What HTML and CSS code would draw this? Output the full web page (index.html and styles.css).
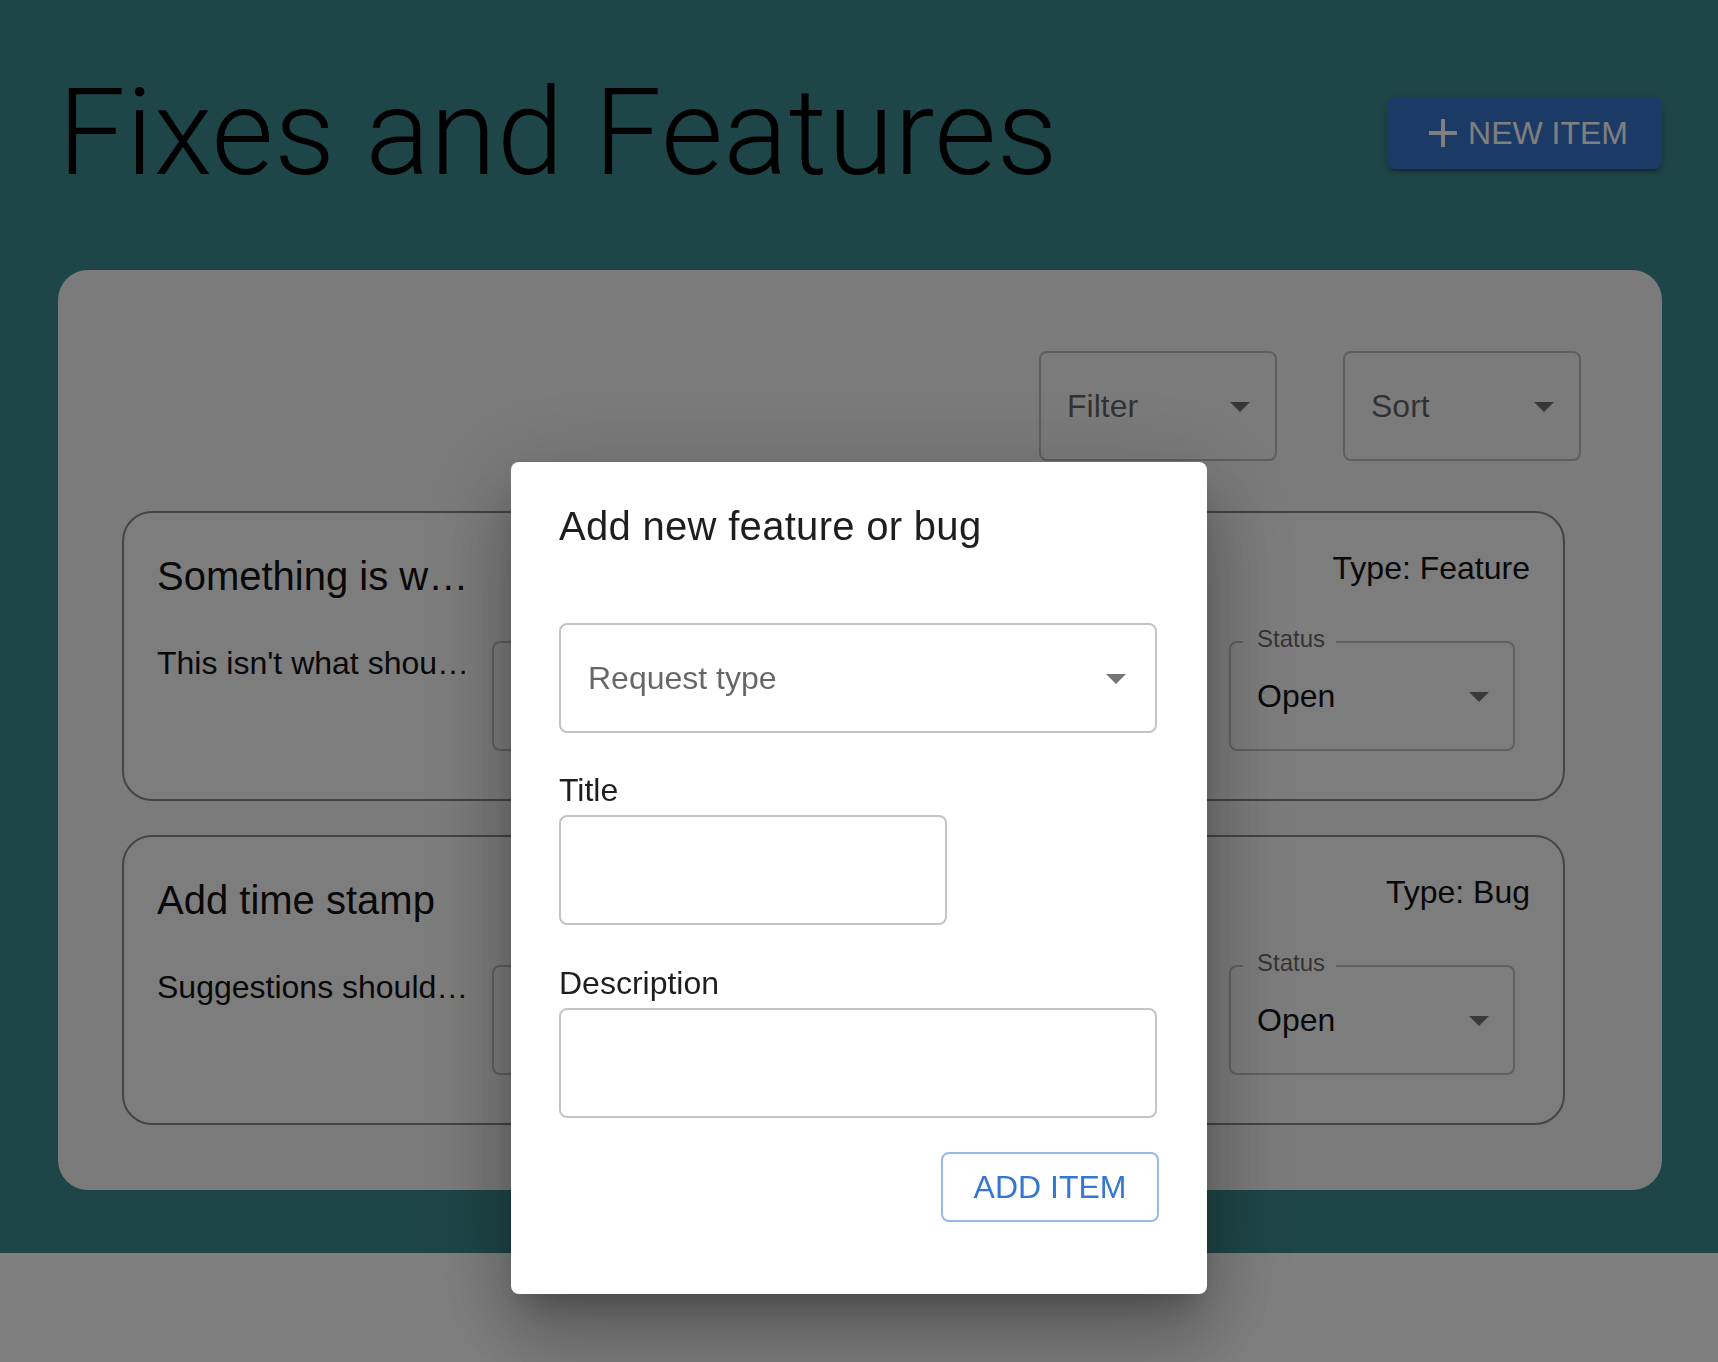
FILE: index.html
```html
<!DOCTYPE html>
<html lang="en">
<head>
<meta charset="utf-8">
<title>Fixes and Features</title>
<link rel="stylesheet" href="styles.css">
</head>
<body>
<div class="page">
  <header class="header">
    <h1 class="title">Fixes and Features</h1>
    <button class="btn-new" type="button">
      <svg class="btn-icon" viewBox="5 5 14 14" aria-hidden="true"><path d="M19 13h-6v6h-2v-6H5v-2h6V5h2v6h6v2z"/></svg>
      <span>New item</span>
    </button>
  </header>

  <main class="panel">
    <div class="toolbar">
      <div class="select select--toolbar">
        <span class="select-placeholder">Filter</span>
        <svg class="arrow" viewBox="0 0 24 24" aria-hidden="true"><path d="M7 10l5 5 5-5z"/></svg>
      </div>
      <div class="select select--toolbar">
        <span class="select-placeholder">Sort</span>
        <svg class="arrow" viewBox="0 0 24 24" aria-hidden="true"><path d="M7 10l5 5 5-5z"/></svg>
      </div>
    </div>

    <div class="cards">
      <article class="card">
        <div class="card-main">
          <h2 class="card-title">Something is wrong</h2>
          <p class="card-desc">This isn't what should happen</p>
        </div>
        <div class="card-middle"><div class="field-box"></div></div>
        <div class="card-side">
          <div class="card-type">Type: Feature</div>
          <div class="status">
            <span class="status-label">Status</span>
            <span class="status-value">Open</span>
            <svg class="arrow" viewBox="0 0 24 24" aria-hidden="true"><path d="M7 10l5 5 5-5z"/></svg>
          </div>
        </div>
      </article>

      <article class="card">
        <div class="card-main">
          <h2 class="card-title">Add time stamp</h2>
          <p class="card-desc">Suggestions should have a time stamp</p>
        </div>
        <div class="card-middle"><div class="field-box"></div></div>
        <div class="card-side">
          <div class="card-type">Type: Bug</div>
          <div class="status">
            <span class="status-label">Status</span>
            <span class="status-value">Open</span>
            <svg class="arrow" viewBox="0 0 24 24" aria-hidden="true"><path d="M7 10l5 5 5-5z"/></svg>
          </div>
        </div>
      </article>
    </div>
  </main>
</div>

<div class="backdrop">
  <div class="dialog" role="dialog" aria-labelledby="dlg-title">
    <h2 class="dialog-title" id="dlg-title">Add new feature or bug</h2>
    <div class="dialog-content">
      <div class="select select--dialog">
        <span class="select-placeholder">Request type</span>
        <svg class="arrow" viewBox="0 0 24 24" aria-hidden="true"><path d="M7 10l5 5 5-5z"/></svg>
      </div>
      <label class="field-label" for="f-title">Title</label>
      <input class="input input--short" id="f-title" type="text">
      <label class="field-label" for="f-desc">Description</label>
      <input class="input" id="f-desc" type="text">
      <div class="actions">
        <button class="btn-add" type="button">Add item</button>
      </div>
    </div>
  </div>
</div>
</body>
</html>
```

FILE: styles.css
```css
* { box-sizing: border-box; }

html, body {
  margin: 0;
  padding: 0;
  background: #ffffff;
  font-family: "Liberation Sans", Arial, Helvetica, sans-serif;
  color: #111;
}

.page {
  background: #3d8b91;
  padding: 0 56px 63px 58px;
}

.header {
  height: 266px;
  display: flex;
  align-items: center;
  justify-content: space-between;
}

.title {
  margin: 0;
  font-family: Roboto, "Liberation Sans", sans-serif;
  font-weight: 300;
  font-size: 120px;
  line-height: 1;
  letter-spacing: 0.6px;
  color: #000;
}

.btn-new {
  display: flex;
  align-items: center;
  height: 72px;
  padding: 0 34px 0 42px;
  border: 0;
  border-radius: 8px;
  background: #3874cc;
  color: #fff;
  font-family: "Liberation Sans", Arial, sans-serif;
  font-size: 32px;
  text-transform: uppercase;
  box-shadow: 0 6px 2px -4px rgba(0,0,0,.2), 0 4px 4px 0 rgba(0,0,0,.14), 0 2px 10px 0 rgba(0,0,0,.12);
}

.btn-icon {
  width: 28px;
  height: 28px;
  margin-right: 11px;
  fill: #fff;
}

.panel {
  margin-top: 4px;
  background: #f6f6f6;
  border-radius: 30px;
  padding: 81px 81px 65px 64px;
}

.toolbar {
  display: flex;
  justify-content: flex-end;
  gap: 66px;
}

.select {
  display: flex;
  align-items: center;
  justify-content: space-between;
  height: 110px;
  border: 2px solid rgba(0,0,0,0.23);
  border-radius: 8px;
  font-size: 32px;
}

.select--toolbar {
  width: 238px;
  padding: 0 11px 0 26px;
}

.select--dialog {
  width: 598px;
  padding: 0 15px 0 27px;
  border-color: #c4c4c4;
}

.select-placeholder {
  color: rgba(0,0,0,0.6);
  line-height: 48px;
}

.arrow {
  width: 48px;
  height: 48px;
  fill: rgba(0,0,0,0.54);
  flex: none;
}

.cards {
  margin-top: 50px;
  margin-right: 16px;
  display: flex;
  flex-direction: column;
  gap: 34px;
}

.card {
  height: 290px;
  background: #fcfafc;
  border: 2px solid #888;
  border-radius: 30px;
  padding: 31px 33px 0;
  display: grid;
  grid-template-columns: 315px 1fr 301px;
  column-gap: 20px;
  align-items: start;
}

.card-main { min-width: 0; }

.card-title {
  margin: 0;
  font-size: 40px;
  font-weight: 400;
  line-height: 64px;
  color: #111;
  white-space: nowrap;
  overflow: hidden;
  text-overflow: ellipsis;
}

.card-desc {
  margin: 31px 0 0;
  font-size: 32px;
  line-height: 48px;
  color: #111;
  white-space: nowrap;
  overflow: hidden;
  text-overflow: ellipsis;
}

.card-middle { padding-top: 97px; }

.field-box {
  width: 600px;
  height: 110px;
  border: 2px solid rgba(0,0,0,0.23);
  border-radius: 8px;
}

.card-side {
  display: flex;
  flex-direction: column;
  align-items: flex-end;
}

.card-type {
  font-size: 32px;
  line-height: 48px;
  color: #111;
}

.status {
  position: relative;
  margin-top: 49px;
  margin-right: 15px;
  width: 286px;
  height: 110px;
  border: 2px solid rgba(0,0,0,0.23);
  border-radius: 8px;
  display: flex;
  align-items: center;
  justify-content: space-between;
  padding: 0 10px 0 26px;
}

.status-label {
  position: absolute;
  top: -16px;
  left: 12px;
  padding: 0 11px 0 14px;
  background: #fcfafc;
  font-size: 24px;
  line-height: 24px;
  color: rgba(0,0,0,0.6);
}

.status-value {
  font-size: 32px;
  line-height: 48px;
  color: #111;
}

/* modal */
.backdrop {
  position: fixed;
  inset: 0;
  background: rgba(0,0,0,0.5);
  display: flex;
  justify-content: center;
  align-items: flex-start;
  padding-top: 462px;
}

.dialog {
  width: 696px;
  background: #fff;
  border-radius: 8px;
  box-shadow: 0 22px 30px -14px rgba(0,0,0,0.25), 0 48px 76px 6px rgba(0,0,0,0.18), 0 18px 92px 16px rgba(0,0,0,0.14);
}

.dialog-title {
  margin: 0;
  padding: 32px 48px 0;
  font-size: 40px;
  font-weight: 400;
  line-height: 64px;
  letter-spacing: 0.3px;
  color: #1e1e1e;
}

.dialog-content {
  padding: 65px 48px 72px;
}

.field-label {
  display: block;
  margin-top: 33px;
  font-size: 32px;
  line-height: 48px;
  height: 49px;
  color: #1e1e1e;
}

.input {
  display: block;
  width: 598px;
  height: 110px;
  border: 2px solid #c4c4c4;
  border-radius: 8px;
  background: #fff;
  font: inherit;
  font-size: 32px;
  padding: 0 27px;
  outline: none;
}

.input--short { width: 388px; }

.input + .field-label { margin-top: 34px; }

.actions {
  margin-top: 34px;
  display: flex;
  justify-content: flex-end;
}

.btn-add {
  width: 218px;
  height: 70px;
  background: #fff;
  border: 2px solid #95b9e8;
  border-radius: 8px;
  color: #3576d1;
  font-family: "Liberation Sans", Arial, sans-serif;
  font-size: 32px;
  text-transform: uppercase;
  padding: 0;
}
```
